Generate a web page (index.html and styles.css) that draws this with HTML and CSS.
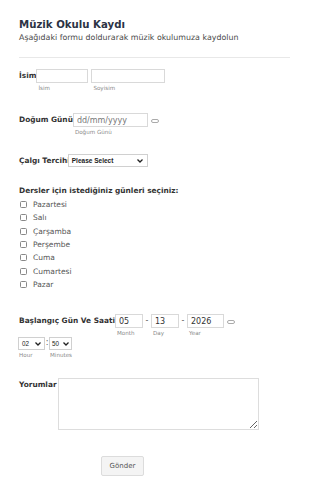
FILE: index.html
```html
<!DOCTYPE html>
<html lang="tr">
<head>
<meta charset="utf-8">
<link rel="stylesheet" href="styles.css">
</head>
<body>
<div class="page">
  <header class="head">
    <h1 class="title">Müzik Okulu Kaydı</h1>
    <p class="subtitle">Aşağıdaki formu doldurarak müzik okulumuza kaydolun</p>
  </header>

  <div class="row row-name">
    <span class="label">İsim</span>
    <div class="field">
      <input class="input w-first" type="text">
      <span class="sub">İsim</span>
    </div>
    <div class="field">
      <input class="input w-last" type="text">
      <span class="sub">Soyisim</span>
    </div>
  </div>

  <div class="row row-birth">
    <span class="label">Doğum Günü</span>
    <div class="field">
      <input class="input w-date ph" type="text" placeholder="dd/mm/yyyy">
      <span class="sub">Doğum Günü</span>
    </div>
    <span class="cal"></span>
  </div>

  <div class="row row-inst">
    <span class="label">Çalgı Tercihi</span>
    <div class="sel w-inst">
      <span class="sel-text">Please Select</span>
      <svg class="chev" width="6" height="4" viewBox="0 0 6 4"><path d="M0.5 0.5 L3 3 L5.5 0.5" fill="none" stroke="#222" stroke-width="1.3"/></svg>
    </div>
  </div>

  <div class="days">
    <div class="label">Dersler için istediğiniz günleri seçiniz:</div>
    <ul class="checks">
      <li><span class="box"></span>Pazartesi</li>
      <li><span class="box"></span>Salı</li>
      <li><span class="box"></span>Çarşamba</li>
      <li><span class="box"></span>Perşembe</li>
      <li><span class="box"></span>Cuma</li>
      <li><span class="box"></span>Cumartesi</li>
      <li><span class="box"></span>Pazar</li>
    </ul>
  </div>

  <div class="row row-start">
    <span class="label">Başlangıç Gün Ve Saati</span>
    <div class="field">
      <input class="input w-md val" type="text" value="05">
      <span class="sub">Month</span>
    </div>
    <span class="dash">-</span>
    <div class="field">
      <input class="input w-md val" type="text" value="13">
      <span class="sub">Day</span>
    </div>
    <span class="dash">-</span>
    <div class="field">
      <input class="input w-yr val" type="text" value="2026">
      <span class="sub">Year</span>
    </div>
    <span class="cal cal2"></span>
  </div>

  <div class="row row-time">
    <div class="field">
      <div class="sel w-h">
        <span class="sel-text">02</span>
        <svg class="chev" width="6" height="4" viewBox="0 0 6 4"><path d="M0.5 0.5 L3 3 L5.5 0.5" fill="none" stroke="#222" stroke-width="1.3"/></svg>
      </div>
      <span class="sub">Hour</span>
    </div>
    <span class="colon">:</span>
    <div class="field">
      <div class="sel w-m">
        <span class="sel-text">50</span>
        <svg class="chev" width="6" height="4" viewBox="0 0 6 4"><path d="M0.5 0.5 L3 3 L5.5 0.5" fill="none" stroke="#222" stroke-width="1.3"/></svg>
      </div>
      <span class="sub">Minutes</span>
    </div>
  </div>

  <div class="row row-comments">
    <span class="label">Yorumlar</span>
    <textarea class="area"></textarea>
  </div>

  <div class="submit-row">
    <button class="btn" type="button">Gönder</button>
  </div>
</div>
</body>
</html>
```

FILE: styles.css
```css
* { box-sizing: border-box; }
html, body { margin: 0; padding: 0; background: #fff; }
body {
  font-family: "DejaVu Sans", Verdana, sans-serif;
  color: #333;
  width: 310px;
  height: 496px;
  overflow: hidden;
}
.page { padding: 18px 20px 0 19px; }

.head {
  border-bottom: 1px solid #e8e8e8;
  padding-bottom: 14px;
  width: 271px;
}
.title {
  margin: 0;
  font-size: 10.2px;
  font-weight: bold;
  color: #2c3345;
  line-height: 13px;
}
.subtitle {
  margin: 1px 0 0;
  font-size: 7.9px;
  color: #4a4a4a;
  line-height: 11px;
}

.row { display: flex; align-items: flex-start; }
.label {
  font-size: 7.4px;
  font-weight: bold;
  color: #333;
  line-height: 11px;
  padding-top: 1px;
  white-space: nowrap;
}
.field { display: flex; flex-direction: column; }
.input {
  border: 1px solid #d9d9d9;
  height: 14px;
  margin: 0;
  padding: 0 3px;
  font-family: inherit;
  font-size: 8px;
  color: #333;
  background: #fff;
  outline: none;
}
.ph::placeholder { color: #777; }
.val { font-size: 8px; color: #333; padding-left: 3px; }
.sub {
  font-size: 5.6px;
  color: #8a8a8a;
  line-height: 8px;
  margin-top: 1px;
  padding-left: 2px;
}

.row-name { margin-top: 11px; }
.w-first { width: 52px; margin-right: 3px; }
.w-last { width: 74px; }

.row-birth { margin-top: 21px; }
.w-date { width: 75px; }
.cal {
  width: 8px;
  height: 4px;
  border: 1px solid #aaa;
  border-radius: 2px;
  margin: 6px 0 0 3px;
}

.row-inst { margin-top: 18px; }
.sel {
  position: relative;
  border: 1px solid #d0d0d0;
  height: 13px;
  background: #fff;
  display: flex;
  align-items: center;
  padding-left: 3px;
}
.sel-text { font-size: 6.5px; color: #222; font-family: "Liberation Sans", Arial, sans-serif; }
.chev { position: absolute; right: 3px; top: 4px; }
.w-inst { width: 80px; margin-left: -2px; }
.w-inst .sel-text { font-weight: bold; font-size: 6.5px; }
.w-inst .chev { right: 4px; }

.days { margin-top: 17px; }
.checks { list-style: none; margin: 2px 0 0; padding: 0 0 0 1px; }
.checks li {
  display: flex;
  align-items: center;
  height: 13.3px;
  font-size: 7.5px;
  color: #555;
}
.box {
  width: 7px;
  height: 7px;
  border: 1px solid #888;
  border-radius: 1.5px;
  margin-right: 6px;
}

.row-start { margin-top: 23px; }
.w-md { width: 28px; }
.w-yr { width: 37px; }
.dash { font-size: 8px; color: #555; width: 8px; text-align: center; line-height: 14px; }
.cal2 { margin-left: 3px; }

.row-time { margin-top: 0; margin-left: -1px; }
.w-h { width: 27px; }
.w-m { width: 23px; padding-left: 2px; }
.w-m .chev { right: 2px; }
.row-time .sel-text { font-size: 6.3px; }
.colon { font-size: 8px; color: #555; width: 4px; text-align: center; line-height: 12px; }
.row-time .sub { padding-left: 1px; }

.row-comments { margin-top: 19px; }
.area {
  width: 201px;
  height: 52px;
  border: 1px solid #ddd;
  margin: 0 0 0 1px;
  resize: both;
}

.submit-row { margin-top: 23px; padding-left: 82px; }
.btn {
  width: 43px;
  height: 20px;
  border: 1px solid #dcdcdc;
  border-radius: 2px;
  background: #f4f4f4;
  font-family: inherit;
  font-size: 7px;
  color: #555;
  padding: 0;
}
```
